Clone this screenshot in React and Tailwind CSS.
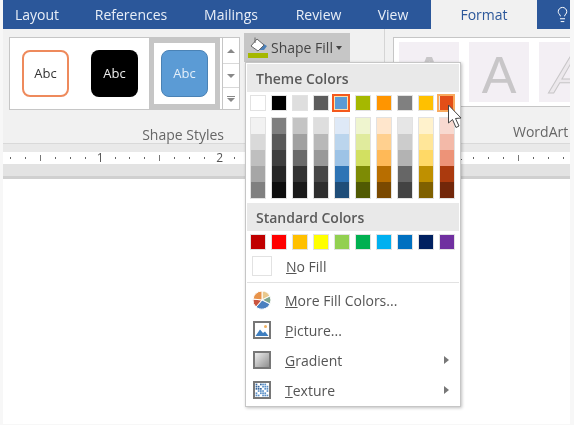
import React from "react";
import { Lightbulb } from "lucide-react";

const font = "font-['Open_Sans','Noto_Sans',sans-serif]";

const tabs = [
  { label: "Layout", width: "w-[68px]" },
  { label: "References", width: "w-[120px]" },
  { label: "Mailings", width: "w-[80px]" },
  { label: "Review", width: "w-[95px]" },
  { label: "View", width: "w-[54px]" },
];

const themeBase = [
  "bg-[#ffffff]", "bg-[#000000]", "bg-[#dedede]", "bg-[#5c5c5c]", "bg-[#5b9bd5]",
  "bg-[#a5b800]", "bg-[#ff9500]", "bg-[#808080]", "bg-[#ffc000]", "bg-[#e34e17]",
];

const themeShades = [
  ["bg-[#f2f2f2]", "bg-[#d9d9d9]", "bg-[#bfbfbf]", "bg-[#a6a6a6]", "bg-[#808080]"],
  ["bg-[#7f7f7f]", "bg-[#595959]", "bg-[#3f3f3f]", "bg-[#262626]", "bg-[#0d0d0d]"],
  ["bg-[#c4c4c4]", "bg-[#a0a0a0]", "bg-[#6b6b6b]", "bg-[#333333]", "bg-[#1a1a1a]"],
  ["bg-[#dedede]", "bg-[#b8b8b8]", "bg-[#999999]", "bg-[#474747]", "bg-[#2e2e2e]"],
  ["bg-[#dee9f7]", "bg-[#bbd5ed]", "bg-[#9dc3e6]", "bg-[#2e74b5]", "bg-[#1f4e79]"],
  ["bg-[#eff5cf]", "bg-[#e0eb9d]", "bg-[#d2e061]", "bg-[#7d8b05]", "bg-[#505a03]"],
  ["bg-[#ffe6cc]", "bg-[#ffd08f]", "bg-[#ffb957]", "bg-[#b86e00]", "bg-[#7a4900]"],
  ["bg-[#e6e6e6]", "bg-[#cccccc]", "bg-[#b3b3b3]", "bg-[#666666]", "bg-[#434343]"],
  ["bg-[#fff2cc]", "bg-[#ffe699]", "bg-[#ffd966]", "bg-[#bf9000]", "bg-[#7f6000]"],
  ["bg-[#f8d9d0]", "bg-[#f3b9a8]", "bg-[#ed9378]", "bg-[#ab3a0e]", "bg-[#72270a]"],
];

const standard = [
  "bg-[#c00000]", "bg-[#ff0000]", "bg-[#ffc000]", "bg-[#ffff00]", "bg-[#92d050]",
  "bg-[#00b050]", "bg-[#00b0f0]", "bg-[#0070c0]", "bg-[#002060]", "bg-[#7030a0]",
];

// ruler ticks about every 15px, long tick and number alternate every 60px
const rulerMarks = Array.from({ length: 38 }, (_, i) => {
  if (i % 8 === 6) return String((i + 2) / 8);
  if (i % 8 === 2) return "long";
  return "dot";
});

const Swatch = ({ color }) => (
  <div className="w-[21px] flex justify-center">
    <div className={`w-[16px] h-[16px] border border-[#e2e2e2] ${color}`} />
  </div>
);

const MenuHeader = ({ children }) => (
  <div className="h-[28px] flex items-center pl-[9px] bg-[#e9e9e9] text-[14px] font-semibold text-[#5a5a5a]">
    {children}
  </div>
);

const MenuRow = ({ icon, children, arrow }) => (
  <div className="h-[30px] flex items-center text-[14px] text-[#555]">
    <div className="w-[30px] mr-[8px] flex justify-center">{icon}</div>
    <span>{children}</span>
    {arrow && (
      <span className="ml-auto mr-[10px] w-0 h-0 border-y-[4px] border-y-transparent border-l-[5px] border-l-[#777]" />
    )}
  </div>
);

const PieIcon = () => (
  <svg width="20" height="20" viewBox="0 0 20 20" stroke="#fff" strokeWidth="1">
    <path d="M10 10 L10 1 A9 9 0 0 1 18 6 Z" fill="#e9c88c" />
    <path d="M10 10 L18 6 A9 9 0 0 1 18 14 Z" fill="#7fa58c" />
    <path d="M10 10 L18 14 A9 9 0 0 1 4 17 Z" fill="#4a80c0" />
    <path d="M10 10 L4 17 A9 9 0 0 1 1 9 Z" fill="#c9543f" />
    <path d="M10 10 L1 9 A9 9 0 0 1 10 1 Z" fill="#e8934a" />
  </svg>
);

const PictureIcon = () => (
  <svg width="18" height="18" viewBox="0 0 18 18">
    <rect x="1" y="1" width="16" height="16" fill="#fff" stroke="#777" strokeWidth="2" />
    <circle cx="12.5" cy="5.5" r="1.5" fill="#f0b060" />
    <path d="M2.5 15 L7 8.5 L10 12 L12 10.5 L15.5 15 Z" fill="#3f7fc0" />
  </svg>
);

const GradientIcon = () => (
  <svg width="18" height="18" viewBox="0 0 18 18">
    <defs>
      <linearGradient id="menuGrad" x1="0" y1="0" x2="1" y2="1">
        <stop offset="0" stopColor="#f4f4f4" />
        <stop offset="1" stopColor="#8a8a8a" />
      </linearGradient>
    </defs>
    <rect x="1" y="1" width="16" height="16" fill="url(#menuGrad)" stroke="#777" strokeWidth="2" />
  </svg>
);

const TextureIcon = () => {
  const dots = [];
  for (let y = 0; y < 6; y++) {
    for (let x = 0; x < 6; x++) {
      if ((x * 3 + y * 5) % 4 !== 3) {
        dots.push(
          <rect
            key={`${x}-${y}`}
            x={2.6 + x * 2.2}
            y={2.6 + y * 2.2}
            width="1.7"
            height="1.7"
            fill={x < 3 && y < 3 ? "#35679f" : "#5a90c8"}
          />
        );
      }
    }
  }
  return (
    <svg width="18" height="18" viewBox="0 0 18 18">
      <rect x="1" y="1" width="16" height="16" fill="#fff" stroke="#777" strokeWidth="2" />
      {dots}
    </svg>
  );
};

const BucketIcon = () => (
  <div className="w-[21px] flex flex-col items-center">
    <svg width="20" height="16" viewBox="0 0 20 16">
      <path d="M14 6 L19 9 L16 13 L11 13 Z" fill="#4a7fb8" />
      <path d="M9 2 L16 8 L10 14 L3 9 Z" fill="#fff" stroke="#666" />
      <path d="M7 0.5 L7 6" stroke="#666" fill="none" />
    </svg>
    <div className="w-[20px] h-[5px] bg-[#a5b800]" />
  </div>
);

const ShapeSample = ({ box }) => (
  <div className={`w-[47px] h-[47px] rounded-[8px] flex items-center justify-center text-[13px] font-medium ${box}`}>
    Abc
  </div>
);

const WordArtTile = ({ children, width, last }) => (
  <div className={`h-[60px] bg-[#f3eff4] flex overflow-hidden ${width} ${last ? "" : "mr-[10px] shrink-0"}`}>
    {children}
  </div>
);

export default function App() {
  return (
    <div className={`relative w-[574px] h-[425px] overflow-hidden bg-[#f7f7f7] blur-[0.4px] ${font}`}>
      {/* Tabs */}
      <div className="ml-[3px] w-[567px] h-[29px] bg-[#2b579a] flex items-center overflow-hidden text-[14px] text-[#e8eef7]">
        {tabs.map((t) => (
          <div key={t.label} className={`${t.width} shrink-0 text-center`}>{t.label}</div>
        ))}
        <div className="w-[106px] shrink-0 ml-[11px] h-full bg-[#f1f1f1] text-[#2b579a] flex items-center justify-center">Format</div>
        <div className="pl-[17px] shrink-0">
          <Lightbulb size={17} strokeWidth={1.4} className="text-white" />
        </div>
      </div>

      {/* Ribbon */}
      <div className="ml-[3px] w-[567px] h-[115px] bg-[#f1f1f1] border-b border-[#d9d9d9] flex">
        <div className="w-[241px] shrink-0 pl-[6px] pt-[8px] flex flex-col">
          <div className="flex h-[74px]">
            <div className="w-[214px] border border-[#c6c6c6] bg-white flex items-center pl-[12px]">
              <ShapeSample box="bg-white border-2 border-[#ee8a5c] text-[#333]" />
              <div className="w-[22px]" />
              <ShapeSample box="bg-black text-[#eee]" />
              <div className="ml-[11px] w-[71px] h-[71px] border-[5px] border-[#c6c6c6] flex items-center justify-center">
                <ShapeSample box="bg-[#5b9bd5] border border-[#4a82b5] text-[#e4effa]" />
              </div>
            </div>
            <div className="w-[17px] flex flex-col border border-l-0 border-[#c6c6c6] bg-white">
              <div className="h-[26px] flex items-center justify-center border-b border-[#d9d9d9]">
                <span className="w-0 h-0 border-x-[4px] border-x-transparent border-b-[4px] border-b-[#888]" />
              </div>
              <div className="h-[24px] flex items-center justify-center border-b border-[#d9d9d9]">
                <span className="w-0 h-0 border-x-[4px] border-x-transparent border-t-[4px] border-t-[#888]" />
              </div>
              <div className="flex-1 flex flex-col items-center justify-center gap-[1px]">
                <span className="w-[8px] h-[1px] bg-[#888]" />
                <span className="w-0 h-0 border-x-[4px] border-x-transparent border-t-[4px] border-t-[#888]" />
              </div>
            </div>
          </div>
          <div className="w-[215px] mt-[14px] text-right text-[14px] leading-[22px] text-[#666]">Shape Styles</div>
        </div>

        <div className="w-[141px] shrink-0 pt-[4px] border-r border-[#d5d5d5] mb-[3px]">
          <div className="w-[106px] h-[29px] bg-[#c6c6c6] flex items-center pl-[3px] gap-[3px] text-[14px] text-[#444]">
            <BucketIcon />
            <span>Shape Fill</span>
            <span className="w-0 h-0 border-x-[3px] border-x-transparent border-t-[4px] border-t-[#444]" />
          </div>
        </div>

        <div className="flex-1 min-w-0 pl-[8px] pt-[8px] flex flex-col">
          <div className="h-[74px] bg-white border border-[#c6c6c6] border-r-0 flex items-center pl-[5px] overflow-hidden">
            <WordArtTile width="w-[60px] justify-center">
              <span className="text-[52px] leading-[60px] pt-[3px] text-[#c8c6c8] font-['Liberation_Sans']">A</span>
            </WordArtTile>
            <WordArtTile width="w-[60px] justify-center">
              <span className="text-[52px] leading-[60px] pt-[3px] text-[#c8c6c8] font-['Liberation_Sans']">A</span>
            </WordArtTile>
            <WordArtTile width="w-[32px] pl-[12px]" last>
              <span className="text-[52px] leading-[60px] pt-[3px] italic text-[#ece8ec] font-['Liberation_Sans'] [-webkit-text-stroke:1px_#c8c6c8]">A</span>
            </WordArtTile>
          </div>
          <div className="mt-[14px] pl-[120px] text-[14px] text-[#666] leading-[22px] whitespace-nowrap">WordArt</div>
        </div>
      </div>

      {/* Ruler */}
      <div className="ml-[3px] w-[567px] h-[8px] bg-[#e9e9e9]" />
      <div className="ml-[3px] w-[567px] h-[12px] bg-white flex items-center overflow-hidden">
        {rulerMarks.map((m, i) => (
          <div key={i} className="w-[14.95px] shrink-0 flex items-center justify-center text-[12px] leading-[12px] text-[#555]">
            {m === "dot" && <span className="w-[1px] h-[2px] bg-[#666]" />}
            {m === "long" && <span className="w-[1px] h-[6px] bg-[#777]" />}
            {m !== "dot" && m !== "long" && m}
          </div>
        ))}
      </div>
      <div className="ml-[3px] w-[567px] h-[12px] bg-[#e3e3e3]" />
      <div className="ml-[3px] w-[567px] h-[3px] bg-[#d0d0d0]" />

      {/* Page */}
      <div className="ml-[3px] w-[567px] h-[245px] bg-white" />

      {/* Shape Fill menu */}
      <div className="absolute left-[245px] top-[62px] w-[216px] h-[345px] bg-white border border-[#c6c6c6] p-[1px] shadow-[1px_1px_3px_rgba(0,0,0,0.25)]">
        <MenuHeader>Theme Colors</MenuHeader>
        <div className="flex mt-[3px] h-[16px]">
          {themeBase.map((c, i) => (
            <div key={c} className="relative">
              <Swatch color={c} />
              {i === 4 && <div className="absolute left-[1px] -top-[1px] w-[18px] h-[18px] border-2 border-[#f4591d] outline outline-1 -outline-offset-3 outline-[#ffe0a8]" />}
              {i === 9 && <div className="absolute left-[1px] -top-[1px] w-[18px] h-[18px] border-2 border-[#f9aa5e]" />}
            </div>
          ))}
        </div>
        <div className="flex mt-[6px]">
          {themeShades.map((col, i) => (
            <div key={i} className="w-[21px] flex justify-center">
              <div className="w-[16px] border border-[#e2e2e2] flex flex-col">
                {col.map((c) => (
                  <div key={c} className={`h-[16px] ${c}`} />
                ))}
              </div>
            </div>
          ))}
        </div>
        <div className="mt-[4px]">
          <MenuHeader>Standard Colors</MenuHeader>
        </div>
        <div className="flex mt-[3px] h-[16px]">
          {standard.map((c) => (
            <Swatch key={c} color={c} />
          ))}
        </div>
        <div className="h-[32px] flex items-center text-[14px] text-[#555]">
          <div className="ml-[5px] w-[20px] h-[20px] border border-[#e2e2e2]" />
          <span className="ml-[14px]"><u>N</u>o Fill</span>
        </div>
        <div className="h-[1px] bg-[#e2e2e2] mb-[2px]" />
        <MenuRow icon={<PieIcon />}><u>M</u>ore Fill Colors...</MenuRow>
        <MenuRow icon={<PictureIcon />}><u>P</u>icture...</MenuRow>
        <MenuRow icon={<GradientIcon />} arrow><u>G</u>radient</MenuRow>
        <MenuRow icon={<TextureIcon />} arrow><u>T</u>exture</MenuRow>
      </div>

      {/* Mouse cursor */}
      <svg className="absolute left-[447px] top-[104px]" width="16" height="26" viewBox="0 0 16 26">
        <path d="M1.5 1 L1.5 19 L5.5 15.5 L9 23.5 L12 22 L8.5 14.5 L14 14 Z" fill="#fff" stroke="#444" strokeWidth="1" />
      </svg>
    </div>
  );
}
